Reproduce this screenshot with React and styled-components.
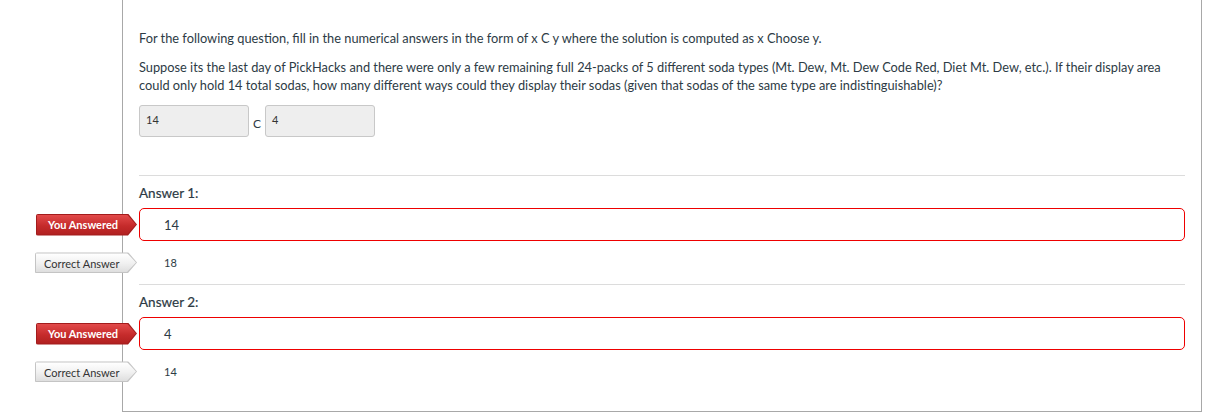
import React from "react";
import styled, { createGlobalStyle } from "styled-components";

const GlobalStyle = createGlobalStyle`
  html, body {
    margin: 0;
    padding: 0;
    background: #fff;
  }
  body {
    font-family: Lato, "Open Sans", "Liberation Sans", sans-serif;
    color: #2d3b45;
  }
`;

const Page = styled.div`
  width: 1213px;
  height: 417px;
  overflow: hidden;
`;

const Panel = styled.div`
  box-sizing: border-box;
  margin-left: 122px;
  width: 1080px;
  border: 1px solid #a8a8a8;
  border-top: none;
  padding: 29px 16px 18px 16px;
`;

const Text = styled.p`
  margin: 0 0 11px;
  font-size: 12.8px;
  line-height: 18px;
  color: #2d3b45;
`;

const Inputs = styled.div`
  display: flex;
  align-items: flex-end;
  gap: 4px;
  margin-top: 11px;
`;

const Field = styled.div`
  box-sizing: border-box;
  width: 110px;
  height: 32px;
  background: #eeeeee;
  border: 1px solid #c8c8c8;
  border-radius: 3px;
  padding: 8px 6px;
  font-size: 11px;
  line-height: 12px;
  color: #333;
`;

const Choose = styled.span`
  font-size: 12px;
  line-height: 12px;
  padding-bottom: 7px;
  color: #2d3b45;
`;

const Block = styled.div`
  border-top: 1px solid #dcdcdc;
  margin-top: ${(p) => p.$top}px;
`;

const Label = styled.div`
  font-size: 13.5px;
  line-height: 16px;
  padding: 9px 0 7px;
  color: #2d3b45;
  -webkit-text-stroke: 0.2px #2d3b45;
`;

const Row = styled.div`
  position: relative;
  display: flex;
  align-items: center;
  box-sizing: border-box;
  height: ${(p) => p.$h}px;
  padding-left: 24px;
  border: ${(p) => (p.$wrong ? "1px solid #ee0000" : "1px solid transparent")};
  border-radius: 5px;
  font-size: ${(p) => (p.$wrong ? 13 : 11)}px;
  color: #2d3b45;
`;

const BadgeShape = styled.div`
  position: absolute;
  right: calc(100% + 3px);
  top: 50%;
  transform: translateY(-50%);
  width: ${(p) => p.$w}px;
  height: ${(p) => p.$h}px;
  padding: 1px;
  box-sizing: border-box;
  background: ${(p) => (p.$red ? "#a31c1c" : "#c4c4c4")};
  clip-path: polygon(0 0, calc(100% - 9px) 0, 100% 50%, calc(100% - 9px) 100%, 0 100%);
  border-radius: 2px;
`;

const BadgeInner = styled.div`
  height: 100%;
  box-sizing: border-box;
  clip-path: polygon(0 0, calc(100% - 9px) 0, 100% 50%, calc(100% - 9px) 100%, 0 100%);
  background: ${(p) =>
    p.$red
      ? "linear-gradient(#e24a4a, #c52b2b 55%, #b02020)"
      : "linear-gradient(#ffffff, #f1f1f1 50%, #dddddd)"};
  color: ${(p) => (p.$red ? "#fff" : "#333")};
  font-size: 11px;
  font-weight: ${(p) => (p.$red ? 700 : 400)};
  display: flex;
  align-items: center;
  padding-left: ${(p) => (p.$red ? 11 : 8)}px;
  white-space: nowrap;
`;

const Badge = ({ red, children }) => (
  <BadgeShape $red={red} $w={red ? 101 : 102} $h={red ? 22 : 21}>
    <BadgeInner $red={red}>{children}</BadgeInner>
  </BadgeShape>
);

const Answer = ({ label, given, correct, top }) => (
  <Block $top={top}>
    <Label>{label}</Label>
    <Row $wrong $h={33}>
      <Badge red>You Answered</Badge>
      {given}
    </Row>
    <Row $h={43}>
      <Badge>Correct Answer</Badge>
      {correct}
    </Row>
  </Block>
);

export default function App() {
  return (
    <Page>
      <GlobalStyle />
      <Panel>
        <Text>
          For the following question, fill in the numerical answers in the form
          of x C y where the solution is computed as x Choose y.
        </Text>
        <Text>
          Suppose its the last day of PickHacks and there were only a few
          remaining full 24-packs of 5 different soda types (Mt. Dew, Mt. Dew
          Code Red, Diet Mt. Dew, etc.). If their display area could only hold
          14 total sodas, how many different ways could they display their
          sodas (given that sodas of the same type are indistinguishable)?
        </Text>
        <Inputs>
          <Field>14</Field>
          <Choose>C</Choose>
          <Field>4</Field>
        </Inputs>
        <Answer label="Answer 1:" given="14" correct="18" top={38} />
        <Answer label="Answer 2:" given="4" correct="14" top={0} />
      </Panel>
    </Page>
  );
}
